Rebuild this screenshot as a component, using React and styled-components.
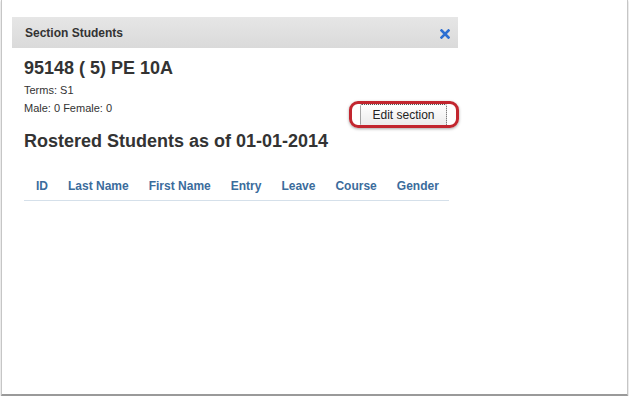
import React from "react";
import styled, { createGlobalStyle } from "styled-components";

const Global = createGlobalStyle`
  html, body { margin: 0; padding: 0; background: #ffffff; }
  body { font-family: "Liberation Sans", Arial, Helvetica, sans-serif; color: #333; }
`;

const Window = styled.div`
  box-sizing: border-box;
  margin-left: 1px;
  width: 627px;
  height: 396px;
  background: #fff;
  border-left: 1px solid #c6c6c6;
  border-right: 1px solid #c6c6c6;
  border-bottom: 2px solid #9a9a9a;
  box-shadow: 0 1px 2px rgba(0, 0, 0, 0.25);
  padding: 17px 0 0 10px;
`;

const Panel = styled.div`
  width: 446px;
`;

const HeaderBar = styled.div`
  height: 31px;
  display: flex;
  align-items: center;
  justify-content: space-between;
  padding: 0 8px 0 13px;
  background: linear-gradient(#e6e6e6, #dadada);
  font-size: 12px;
  font-weight: bold;
  color: #333;
`;

const Close = styled.button`
  border: 0;
  background: none;
  padding: 0;
  margin: 2px 0 0 0;
  width: 10px;
  height: 10px;
  display: flex;
  cursor: pointer;
`;

const Body = styled.div`
  padding: 9px 11px 0 12px;
`;

const Title = styled.h2`
  margin: 0;
  font-size: 18px;
  line-height: 22px;
  font-weight: bold;
  color: #333;
`;

const InfoRow = styled.div`
  display: flex;
  justify-content: space-between;
  align-items: flex-start;
  margin-top: 2px;
`;

const Info = styled.div`
  font-size: 11px;
  line-height: 18px;
  color: #333;
`;

const ButtonWrap = styled.div`
  position: relative;
  margin: 23px 0 0 0;
`;

const Highlight = styled.span`
  position: absolute;
  left: -11px;
  right: -12px;
  top: -3px;
  bottom: -2px;
  border: 3px solid #c2262f;
  border-radius: 9px;
  box-shadow: 0 1px 3px rgba(0, 0, 0, 0.35);
  pointer-events: none;
`;

const EditButton = styled.button`
  box-sizing: border-box;
  display: block;
  height: 22px;
  width: 87px;
  padding: 0;
  font-family: "Liberation Sans", Arial, sans-serif;
  font-size: 12px;
  color: #222;
  background: linear-gradient(#ffffff, #ececec);
  border: 1px dotted #555;
  border-radius: 2px;
`;

const Heading = styled.h3`
  margin: 3px 0 0 0;
  font-size: 18px;
  line-height: 24px;
  font-weight: bold;
  color: #333;
`;

const Table = styled.table`
  margin-top: 26px;
  border-collapse: collapse;
`;

const Th = styled.th`
  padding: 0 10px 0 ${(p) => (p.$first ? "12px" : "10px")};
  height: 21px;
  font-size: 12px;
  font-weight: bold;
  color: #3b6c9c;
  text-align: left;
  white-space: nowrap;
  border-bottom: 1px solid #d5e0ea;
  vertical-align: top;
  line-height: 14px;
`;

const columns = ["ID", "Last Name", "First Name", "Entry", "Leave", "Course", "Gender"];

export default function App() {
  return (
    <>
      <Global />
      <Window>
        <Panel>
          <HeaderBar>
            <span>Section Students</span>
            <Close aria-label="close">
              <svg width="10" height="10" viewBox="0 0 10 10">
                <path d="M1.5 1.5 L8.5 8.5 M8.5 1.5 L1.5 8.5" stroke="#2d6fd2" strokeWidth="2.6" strokeLinecap="square" />
              </svg>
            </Close>
          </HeaderBar>
          <Body>
            <Title>95148 ( 5) PE 10A</Title>
            <InfoRow>
              <Info>
                <div>Terms: S1</div>
                <div>Male: 0 Female: 0</div>
              </Info>
              <ButtonWrap>
                <EditButton>Edit section</EditButton>
                <Highlight />
              </ButtonWrap>
            </InfoRow>
            <Heading>Rostered Students as of 01-01-2014</Heading>
            <Table>
              <thead>
                <tr>
                  {columns.map((c, i) => (
                    <Th key={c} $first={i === 0}>{c}</Th>
                  ))}
                </tr>
              </thead>
            </Table>
          </Body>
        </Panel>
      </Window>
    </>
  );
}
